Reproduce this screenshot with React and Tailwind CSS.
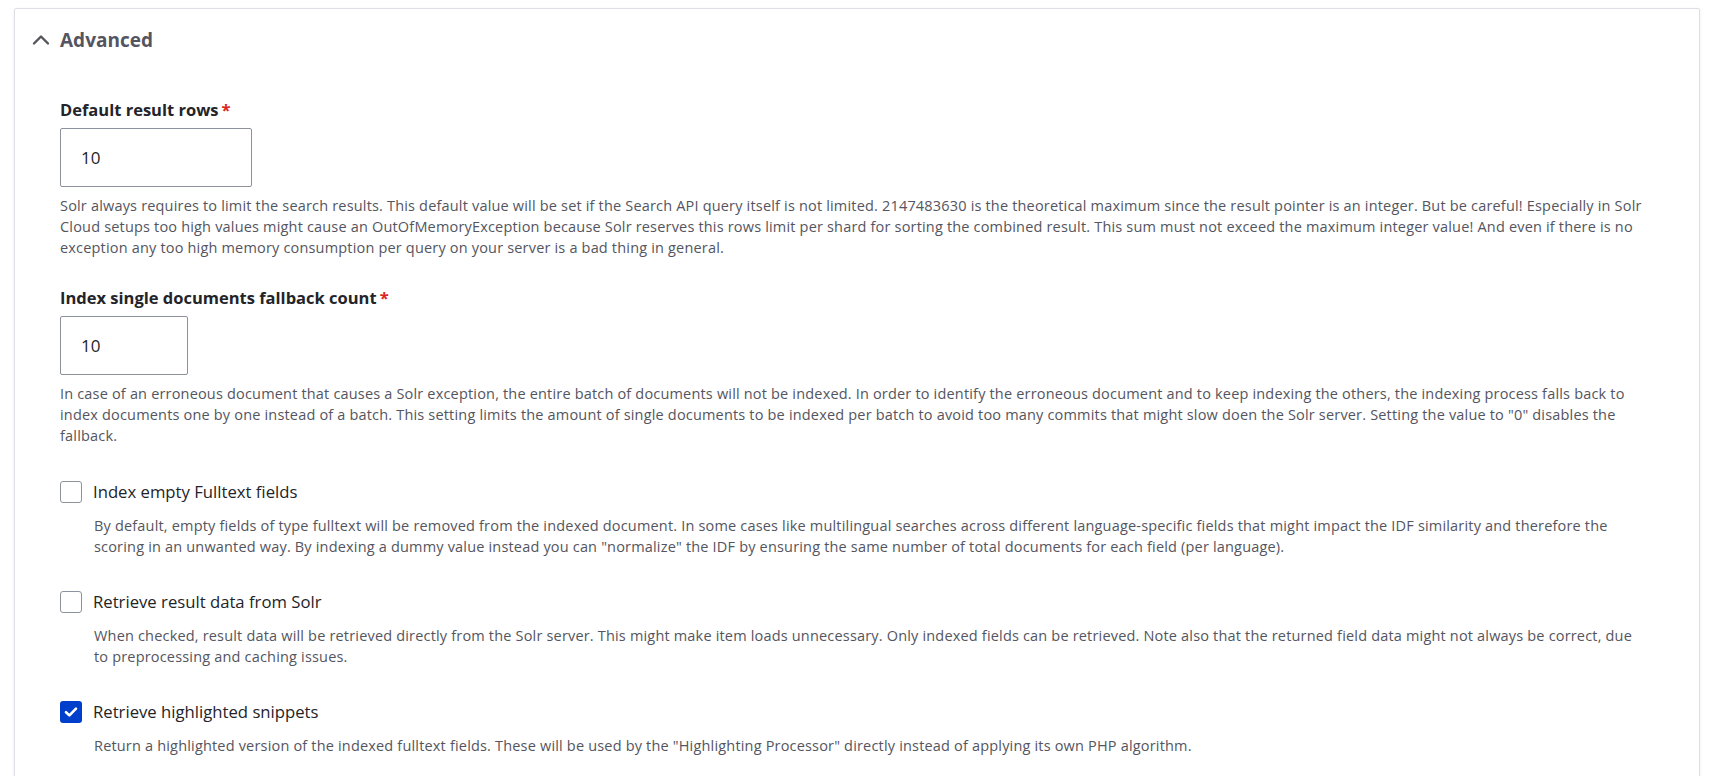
import React from 'react';

const font = { fontFamily: '"Open Sans", "Liberation Sans", sans-serif' };

const NumberField = ({ label, value, width, children, className }) => (
  <div className={className}>
    <label className="block text-[16.5px] leading-[24px] font-bold text-[#232429]">
      {label}
      <span className="text-[#dc2323] ml-[3px]">*</span>
    </label>
    <div
      className={`mt-[6px] h-[59px] ${width} border border-[#8e929c] rounded-[2px] flex items-center pl-[20px] text-[17px] text-[#232429]`}
    >
      {value}
    </div>
    <p className="mt-[8px] text-[14.5px] leading-[21px] text-[#545560] tracking-[0.18px]">{children}</p>
  </div>
);

const CheckField = ({ label, checked, children, className }) => (
  <div className={className}>
    <div className="flex items-center h-[22px]">
      {checked ? (
        <span className="w-[22px] h-[22px] rounded-[3px] bg-[#003ecc] flex items-center justify-center">
          <svg width="14" height="12" viewBox="0 0 14 12" fill="none">
            <path d="M2 6.2 L5.4 9.4 L12 2.6" stroke="#fff" strokeWidth="2.6" strokeLinecap="round" strokeLinejoin="round" />
          </svg>
        </span>
      ) : (
        <span className="w-[22px] h-[22px] rounded-[3px] border border-[#8e929c] bg-white" />
      )}
      <span className="ml-[11px] text-[16.7px] text-[#232429]">{label}</span>
    </div>
    <p className="mt-[12px] pl-[34px] text-[14.5px] leading-[21px] text-[#545560] tracking-[0.18px]">{children}</p>
  </div>
);

export default function App() {
  return (
    <div className="min-h-screen bg-white pt-[8px] pl-[14px] pr-[16px]" style={font}>
      <div className="border border-[#dedfe4] rounded-[2px] shadow-[0_1px_4px_rgba(0,0,0,0.06)] pb-[80px]">
        <div className="mt-[17px] h-[28px] flex items-center pl-[17px]">
          <svg width="18" height="12" viewBox="0 0 18 12" fill="none">
            <path d="M2 9.5 L9 2.5 L16 9.5" stroke="#55565b" strokeWidth="2.4" strokeLinecap="round" strokeLinejoin="round" />
          </svg>
          <span className="ml-[10px] text-[19px] font-bold text-[#545560]">Advanced</span>
        </div>

        <div className="pl-[45px] pr-[54px]">
          <NumberField className="mt-[44px]" label="Default result rows" value="10" width="w-[192px]">
            Solr always requires to limit the search results. This default value will be set if the Search API query itself is not limited. 2147483630 is the theoretical maximum since the result pointer is an integer. But be careful! Especially in Solr Cloud setups too high values might cause an OutOfMemoryException because Solr reserves this rows limit per shard for sorting the combined result. This sum must not exceed the maximum integer value! And even if there is no exception any too high memory consumption per query on your server is a bad thing in general.
          </NumberField>

          <NumberField className="mt-[28px]" label="Index single documents fallback count" value="10" width="w-[128px]">
            In case of an erroneous document that causes a Solr exception, the entire batch of documents will not be indexed. In order to identify the erroneous document and to keep indexing the others, the indexing process falls back to index documents one by one instead of a batch. This setting limits the amount of single documents to be indexed per batch to avoid too many commits that might slow doen the Solr server. Setting the value to "0" disables the fallback.
          </NumberField>

          <CheckField className="mt-[35px]" label="Index empty Fulltext fields">
            By default, empty fields of type fulltext will be removed from the indexed document. In some cases like multilingual searches across different language-specific fields that might impact the IDF similarity and therefore the scoring in an unwanted way. By indexing a dummy value instead you can "normalize" the IDF by ensuring the same number of total documents for each field (per language).
          </CheckField>

          <CheckField className="mt-[34px]" label="Retrieve result data from Solr">
            When checked, result data will be retrieved directly from the Solr server. This might make item loads unnecessary. Only indexed fields can be retrieved. Note also that the returned field data might not always be correct, due to preprocessing and caching issues.
          </CheckField>

          <CheckField className="mt-[34px]" label="Retrieve highlighted snippets" checked>
            Return a highlighted version of the indexed fulltext fields. These will be used by the "Highlighting Processor" directly instead of applying its own PHP algorithm.
          </CheckField>
        </div>
      </div>
    </div>
  );
}
